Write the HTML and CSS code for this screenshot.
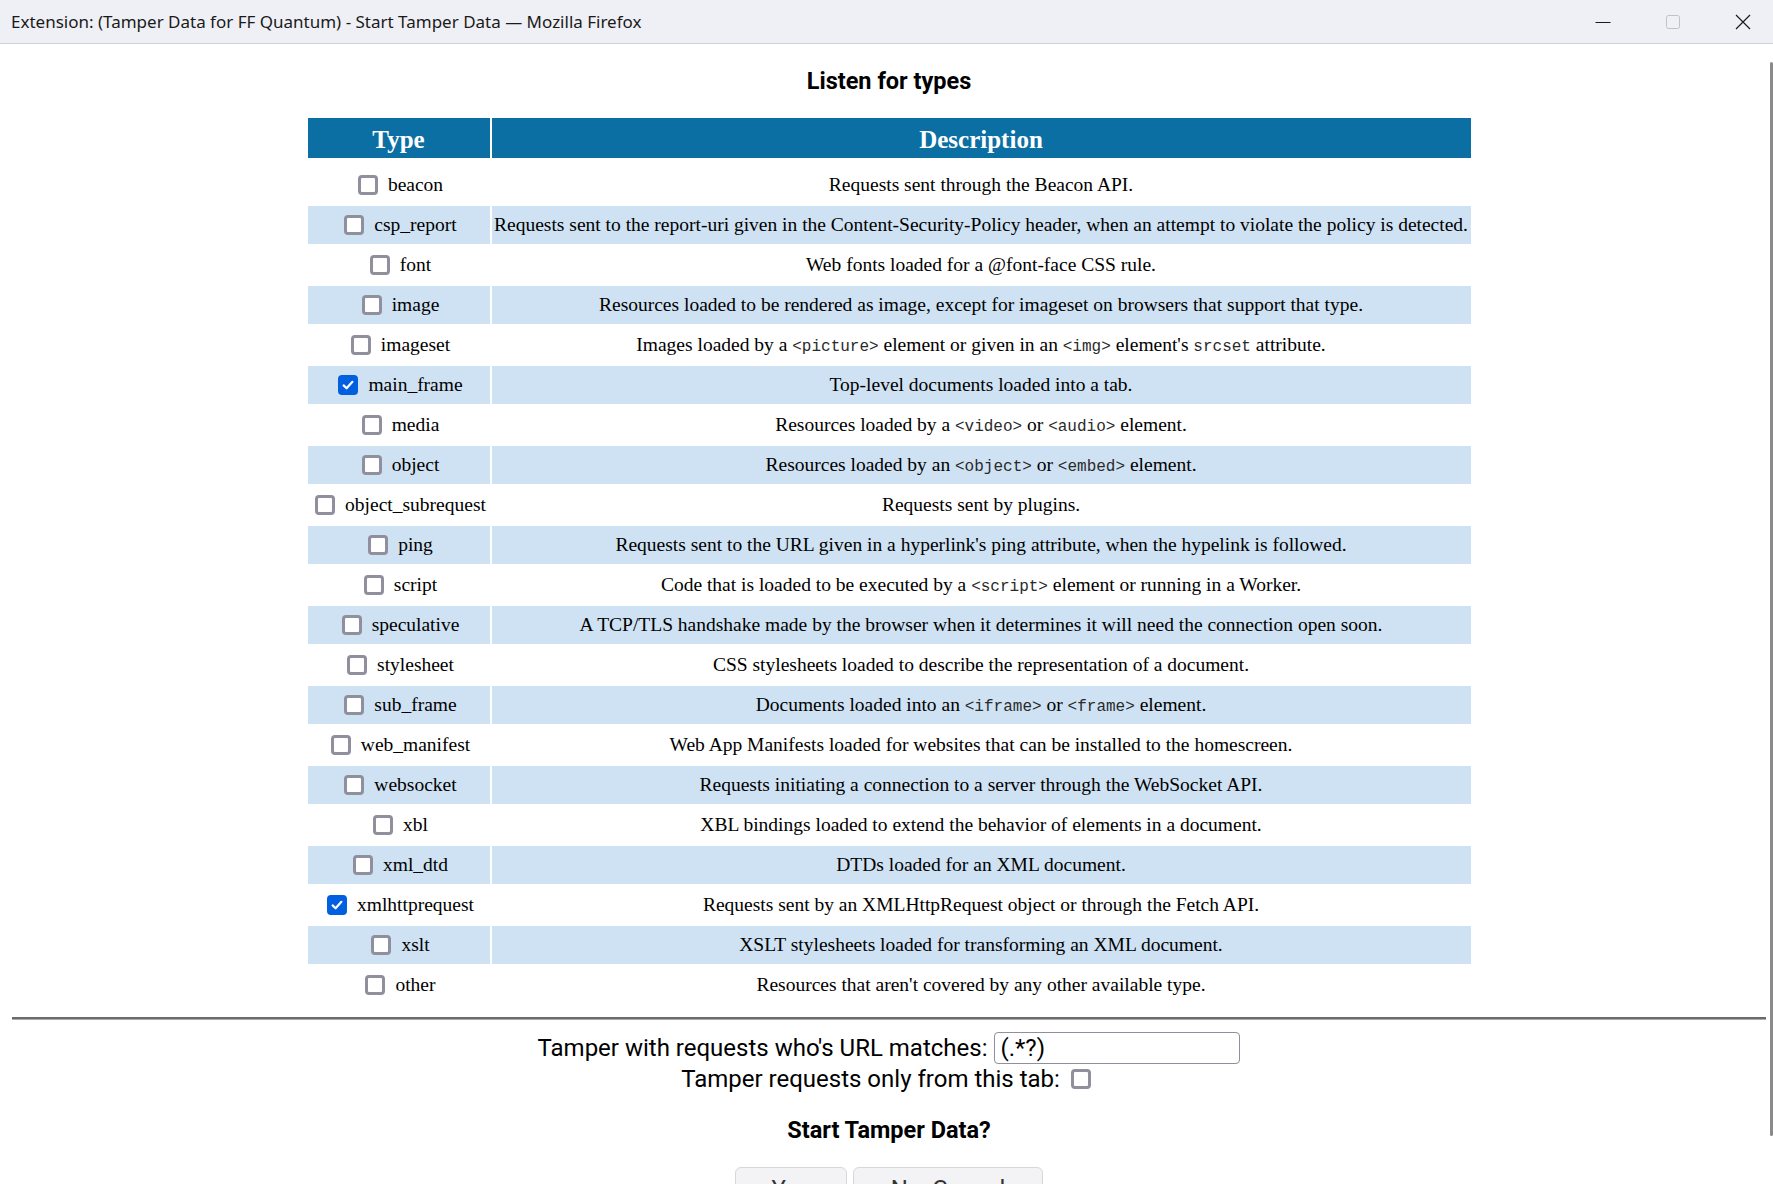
FILE: index.html
```html
<!DOCTYPE html>
<html lang="en">
<head>
<meta charset="utf-8">
<title>Start Tamper Data</title>
<link rel="stylesheet" href="styles.css">
</head>
<body>
<div class="window">
  <header class="titlebar">
    <div class="titlebar-text">Extension: (Tamper Data for FF Quantum) - Start Tamper Data — Mozilla Firefox</div>
    <div class="caption-buttons">
      <span class="caption-btn">
        <svg width="16" height="16" viewBox="0 0 16 16"><line x1="0.5" y1="8.5" x2="15.5" y2="8.5" stroke="#1a1a1a" stroke-width="1"/></svg>
      </span>
      <span class="caption-btn">
        <svg width="16" height="16" viewBox="0 0 16 16"><rect x="1.5" y="1.5" width="13" height="13" rx="2" fill="none" stroke="#c2c2c2" stroke-width="1"/></svg>
      </span>
      <span class="caption-btn">
        <svg width="16" height="16" viewBox="0 0 16 16"><path d="M1 1 L15 15 M15 1 L1 15" stroke="#1a1a1a" stroke-width="1.2" fill="none"/></svg>
      </span>
    </div>
  </header>

  <main class="content">
    <h2 class="page-title">Listen for types</h2>

    <table class="types">
      <thead>
        <tr><th class="col-type">Type</th><th class="col-desc">Description</th></tr>
      </thead>
      <tbody>
        <tr><td class="type"><label><input type="checkbox">beacon</label></td><td class="desc">Requests sent through the Beacon API.</td></tr>
        <tr><td class="type"><label><input type="checkbox">csp_report</label></td><td class="desc">Requests sent to the report-uri given in the Content-Security-Policy header, when an attempt to violate the policy is detected.</td></tr>
        <tr><td class="type"><label><input type="checkbox">font</label></td><td class="desc">Web fonts loaded for a @font-face CSS rule.</td></tr>
        <tr><td class="type"><label><input type="checkbox">image</label></td><td class="desc">Resources loaded to be rendered as image, except for imageset on browsers that support that type.</td></tr>
        <tr><td class="type"><label><input type="checkbox">imageset</label></td><td class="desc">Images loaded by a <code>&lt;picture&gt;</code> element or given in an <code>&lt;img&gt;</code> element's <code>srcset</code> attribute.</td></tr>
        <tr><td class="type"><label><input type="checkbox" checked>main_frame</label></td><td class="desc">Top-level documents loaded into a tab.</td></tr>
        <tr><td class="type"><label><input type="checkbox">media</label></td><td class="desc">Resources loaded by a <code>&lt;video&gt;</code> or <code>&lt;audio&gt;</code> element.</td></tr>
        <tr><td class="type"><label><input type="checkbox">object</label></td><td class="desc">Resources loaded by an <code>&lt;object&gt;</code> or <code>&lt;embed&gt;</code> element.</td></tr>
        <tr><td class="type"><label><input type="checkbox">object_subrequest</label></td><td class="desc">Requests sent by plugins.</td></tr>
        <tr><td class="type"><label><input type="checkbox">ping</label></td><td class="desc">Requests sent to the URL given in a hyperlink's ping attribute, when the hypelink is followed.</td></tr>
        <tr><td class="type"><label><input type="checkbox">script</label></td><td class="desc">Code that is loaded to be executed by a <code>&lt;script&gt;</code> element or running in a Worker.</td></tr>
        <tr><td class="type"><label><input type="checkbox">speculative</label></td><td class="desc">A TCP/TLS handshake made by the browser when it determines it will need the connection open soon.</td></tr>
        <tr><td class="type"><label><input type="checkbox">stylesheet</label></td><td class="desc">CSS stylesheets loaded to describe the representation of a document.</td></tr>
        <tr><td class="type"><label><input type="checkbox">sub_frame</label></td><td class="desc">Documents loaded into an <code>&lt;iframe&gt;</code> or <code>&lt;frame&gt;</code> element.</td></tr>
        <tr><td class="type"><label><input type="checkbox">web_manifest</label></td><td class="desc">Web App Manifests loaded for websites that can be installed to the homescreen.</td></tr>
        <tr><td class="type"><label><input type="checkbox">websocket</label></td><td class="desc">Requests initiating a connection to a server through the WebSocket API.</td></tr>
        <tr><td class="type"><label><input type="checkbox">xbl</label></td><td class="desc">XBL bindings loaded to extend the behavior of elements in a document.</td></tr>
        <tr><td class="type"><label><input type="checkbox">xml_dtd</label></td><td class="desc">DTDs loaded for an XML document.</td></tr>
        <tr><td class="type"><label><input type="checkbox" checked>xmlhttprequest</label></td><td class="desc">Requests sent by an XMLHttpRequest object or through the Fetch API.</td></tr>
        <tr><td class="type"><label><input type="checkbox">xslt</label></td><td class="desc">XSLT stylesheets loaded for transforming an XML document.</td></tr>
        <tr><td class="type"><label><input type="checkbox">other</label></td><td class="desc">Resources that aren't covered by any other available type.</td></tr>
      </tbody>
    </table>

    <hr class="divider">

    <div class="options">
      <div class="option-row">
        <label for="url">Tamper with requests who's URL matches:</label>
        <input id="url" class="url-input" type="text" value="(.*?)">
      </div>
      <div class="option-row option-tab">
        <label for="tabonly">Tamper requests only from this tab:</label>
        <input id="tabonly" class="tab-check" type="checkbox">
      </div>
    </div>

    <h3 class="confirm">Start Tamper Data?</h3>

    <div class="actions">
      <button class="btn btn-yes">Yes</button>
      <button class="btn btn-no">No, Cancel</button>
    </div>
  </main>

  <div class="scrollbar"></div>
</div>
</body>
</html>
```

FILE: styles.css
```css
html, body {
  margin: 0;
  padding: 0;
  height: 100%;
  overflow: hidden;
  background: #ffffff;
}

body {
  font-family: Roboto, "Liberation Sans", sans-serif;
  color: #000;
}

.window {
  position: relative;
  height: 100%;
}

/* ---------- title bar ---------- */
.titlebar {
  height: 43px;
  display: flex;
  align-items: center;
  justify-content: space-between;
  background: #eff0f5;
  border-top: 1px solid #3a3a3a;
  border-bottom: 1px solid #cfd0d6;
  box-sizing: content-box;
  margin-top: -1px;
}

.titlebar-text {
  font-family: "Noto Sans", "Open Sans", sans-serif;
  font-size: 17px;
  color: #1a1a1a;
  padding-left: 11px;
  white-space: nowrap;
}

.caption-buttons {
  display: flex;
  gap: 30px;
  padding-right: 10px;
}

.caption-btn {
  width: 40px;
  height: 30px;
  display: flex;
  align-items: center;
  justify-content: center;
}

/* ---------- content ---------- */
.content {
  padding: 0 7px 0 12px;
}

.page-title {
  margin: 22px 0 0;
  font-size: 23.5px;
  line-height: 30px;
  font-weight: 700;
  text-align: center;
}

.types {
  margin: 20px auto 0;
  border-collapse: separate;
  border-spacing: 2px;
  font-family: "Liberation Serif", "Times New Roman", serif;
  font-size: 19.5px;
}

.types th {
  height: 40px;
  padding: 3px 0 0;
  box-sizing: border-box;
  background: #0b6fa4;
  background-clip: padding-box;
  border-bottom: 6px solid transparent;
  color: #fff;
  font-size: 25px;
  font-weight: 700;
  line-height: 37px;
}

.types th.col-type { width: 182px; }
.types th.col-desc { width: 979px; }

.types td {
  height: 38px;
  padding: 0;
  text-align: center;
  vertical-align: middle;
  white-space: nowrap;
}

.types td.desc {
  line-height: 38px;
}

.types tbody tr:nth-child(even) td {
  background: #cfe2f3;
}

.type label {
  display: flex;
  justify-content: center;
  align-items: center;
  gap: 10px;
  height: 38px;
  padding-left: 4px;
  line-height: 1;
}

.types code {
  font-family: "Liberation Mono", monospace;
  font-size: 16px;
  line-height: 1;
  color: #2a2a2a;
}

/* checkbox look */
input[type="checkbox"] {
  appearance: none;
  -webkit-appearance: none;
  width: 20px;
  height: 20px;
  margin: 0;
  box-sizing: border-box;
  border: 3px solid #8f8f9d;
  border-radius: 4px;
  background: #fff;
  flex: none;
}

input[type="checkbox"]:checked {
  border-color: #0060df;
  background-color: #0060df;
  background-image: url("data:image/svg+xml;utf8,<svg xmlns='http://www.w3.org/2000/svg' viewBox='0 0 14 14'><path d='M2.6 7.4 L5.6 10.3 L11.4 3.8' fill='none' stroke='white' stroke-width='2.2' stroke-linecap='round' stroke-linejoin='round'/></svg>");
  background-size: 14px 14px;
  background-position: center;
  background-repeat: no-repeat;
}

/* ---------- divider ---------- */
.divider {
  margin: 11px 0 0;
  height: 0;
  border: 0;
  border-top: 2px solid #6b6b6b;
  border-bottom: 1px solid #ababab;
}

/* ---------- options ---------- */
.options {
  margin-top: 12px;
  font-size: 24px;
}

.option-row {
  display: flex;
  justify-content: center;
  align-items: center;
  gap: 7px;
  line-height: 30px;
}

.url-input {
  width: 246px;
  height: 32px;
  box-sizing: border-box;
  border: 1px solid #8f8f9d;
  border-radius: 4px;
  padding: 0 5px;
  font-family: Roboto, "Liberation Sans", sans-serif;
  font-size: 24px;
  color: #000;
  outline: none;
}

.option-tab {
  gap: 11px;
  padding-right: 6px;
}

/* ---------- confirm ---------- */
.confirm {
  margin: 23px 0 0;
  text-align: center;
  font-size: 23.5px;
  line-height: 26px;
  font-weight: 700;
}

.actions {
  margin-top: 24px;
  display: flex;
  justify-content: center;
  gap: 6px;
}

.btn {
  height: 44px;
  border: 1px solid #d7d7db;
  border-radius: 6px;
  background: #f3f3f5;
  font-family: Roboto, "Liberation Sans", sans-serif;
  font-size: 24px;
  color: #333;
  padding: 0;
}

.btn-yes { width: 112px; }
.btn-no { width: 190px; }

/* ---------- overlay scrollbar ---------- */
.scrollbar {
  position: absolute;
  right: 0;
  top: 63px;
  width: 3px;
  height: 1074px;
  background: #8a8a8a;
  border-radius: 2px;
}
```
